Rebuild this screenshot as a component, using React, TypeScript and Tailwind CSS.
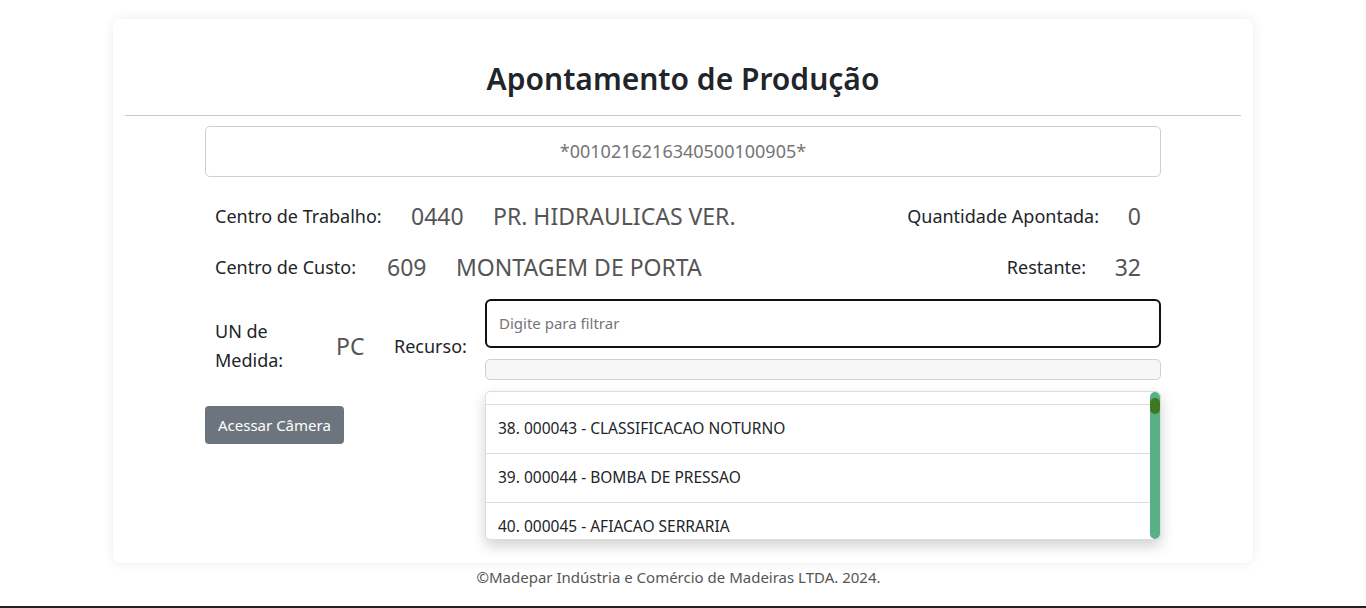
const ITENS = [
  { n: 38, cod: "000043", nome: "CLASSIFICACAO NOTURNO" },
  { n: 39, cod: "000044", nome: "BOMBA DE PRESSAO" },
  { n: 40, cod: "000045", nome: "AFIACAO SERRARIA" },
];

export default function App() {
  return (
    <div className="min-h-[608px] bg-white font-['Noto_Sans',sans-serif] text-[#212529]">
      {/* card principal */}
      <div className="mx-auto mt-[19px] h-[544px] w-[1140px] rounded-[8px] bg-white shadow-[0_0_12px_rgba(0,0,0,0.08)]">
        <h1 className="pt-[40px] text-center text-[30px] font-semibold leading-[40px] text-[#212529]">
          Apontamento de Produção
        </h1>
        <hr className="mx-[12px] mt-[16px] border-t border-[#c8c8c8]" />

        <div className="mx-auto mt-[10px] w-[956px]">
          <div className="flex h-[51px] items-center justify-center rounded-[5px] border border-[#cfcfcf] text-[18px] text-[#757575]">
            *0010216216340500100905*
          </div>

          {/* linha 1 */}
          <div className="mt-[19px] flex h-[40px] items-center pl-[10px] pr-[20px]">
            <span className="w-[196px] text-[18px]">Centro de Trabalho:</span>
            <span className="w-[82px] text-[23px] text-[#555]">0440</span>
            <span className="flex-1 text-[23px] text-[#555]">PR. HIDRAULICAS VER.</span>
            <span className="text-[18px]">Quantidade Apontada:</span>
            <span className="w-[42px] text-right text-[23px] text-[#555]">0</span>
          </div>

          {/* linha 2 */}
          <div className="mt-[11px] flex h-[40px] items-center pl-[10px] pr-[20px]">
            <span className="w-[172px] text-[18px]">Centro de Custo:</span>
            <span className="w-[69px] text-[23px] text-[#555]">609</span>
            <span className="flex-1 text-[23px] text-[#555]">MONTAGEM DE PORTA</span>
            <span className="text-[18px]">Restante:</span>
            <span className="w-[55px] text-right text-[23px] text-[#555]">32</span>
          </div>

          {/* linha 3 */}
          <div className="mt-[12px] flex">
            <div className="w-[280px]">
              <div className="flex h-[82px] items-center pl-[10px] pt-[12px]">
                <div className="w-[121px]">
                  <span className="block w-[80px] text-[18px] leading-[29px]">UN de Medida:</span>
                </div>
                <span className="w-[58px] text-[23px] text-[#555]">PC</span>
                <span className="text-[18px]">Recurso:</span>
              </div>
              <button className="mt-[25px] h-[38px] rounded-[4px] bg-[#6c757d] px-[13px] text-[15px] text-white">
                Acessar Câmera
              </button>
            </div>

            <div className="flex-1">
              <div className="flex h-[49px] items-center rounded-[6px] border-2 border-[#111] pl-[12px] text-[15px] text-[#757575]">
                Digite para filtrar
              </div>
              <div className="mt-[11px] h-[21px] rounded-[5px] border border-[#d0d0d0] bg-[#f7f7f7]" />

              <div className="relative mt-[11px] h-[149px] overflow-hidden rounded-[5px] border border-[#ddd] bg-white shadow-[0_6px_14px_rgba(0,0,0,0.18)]">
                {/* final do item anterior, cortado pela rolagem */}
                <div className="h-[12px]" />
                {ITENS.map((i) => (
                  <div
                    key={i.n}
                    className="flex h-[49px] items-center border-t border-[#ddd] pl-[12px] text-[15.5px] text-[#212529]"
                  >
                    {i.n}. {i.cod} - {i.nome}
                  </div>
                ))}
                {/* barra de rolagem */}
                <div className="absolute right-0 top-0 h-full w-[10px] rounded-full bg-[#58b186]">
                  <div className="mt-[6px] h-[16px] w-[10px] rounded-full bg-[#3c7a22]" />
                </div>
              </div>
            </div>
          </div>
        </div>
      </div>

      <p className="mt-[3px] pr-[9px] text-center text-[15px] leading-[22px] text-[#555]">
        ©Madepar Indústria e Comércio de Madeiras LTDA. 2024.
      </p>
      <div className="mt-[18px] h-[2px] bg-[#222]" />
    </div>
  );
}
